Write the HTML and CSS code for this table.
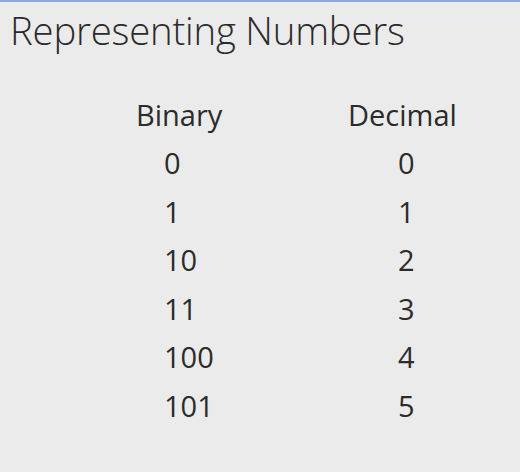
FILE: index.html
```html
<!DOCTYPE html>
<html>
<head>
<meta charset="utf-8">
<link rel="stylesheet" href="styles.css">
</head>
<body>
<div class="slide">
  <h1 class="title">Representing Numbers</h1>
  <div class="table">
    <div class="head">Binary</div><div class="head">Decimal</div>
    <div class="bin">0</div><div class="dec">0</div>
    <div class="bin">1</div><div class="dec">1</div>
    <div class="bin">10</div><div class="dec">2</div>
    <div class="bin">11</div><div class="dec">3</div>
    <div class="bin">100</div><div class="dec">4</div>
    <div class="bin">101</div><div class="dec">5</div>
  </div>
</div>
</body>
</html>
```
FILE: styles.css
```css
html, body {
  margin: 0;
  padding: 0;
  background: #ebebeb;
}
.slide {
  width: 520px;
  height: 472px;
  box-sizing: border-box;
  border-top: 2px solid #8eaadb;
  background: #ebebeb;
  color: #2b2b2b;
  font-family: "Open Sans", "Liberation Sans", sans-serif;
  overflow: hidden;
}
.title {
  margin: 4px 0 0 10px;
  font-size: 38.3px;
  font-weight: 300;
  line-height: 48px;
  letter-spacing: -0.2px;
}
.table {
  margin: 36.5px 0 0 136px;
  display: grid;
  grid-template-columns: 212px 120px;
  grid-auto-rows: 48.5px;
  font-size: 29px;
  line-height: 48.5px;
}
.bin {
  padding-left: 28px;
}
.dec {
  padding-left: 50px;
}
```
